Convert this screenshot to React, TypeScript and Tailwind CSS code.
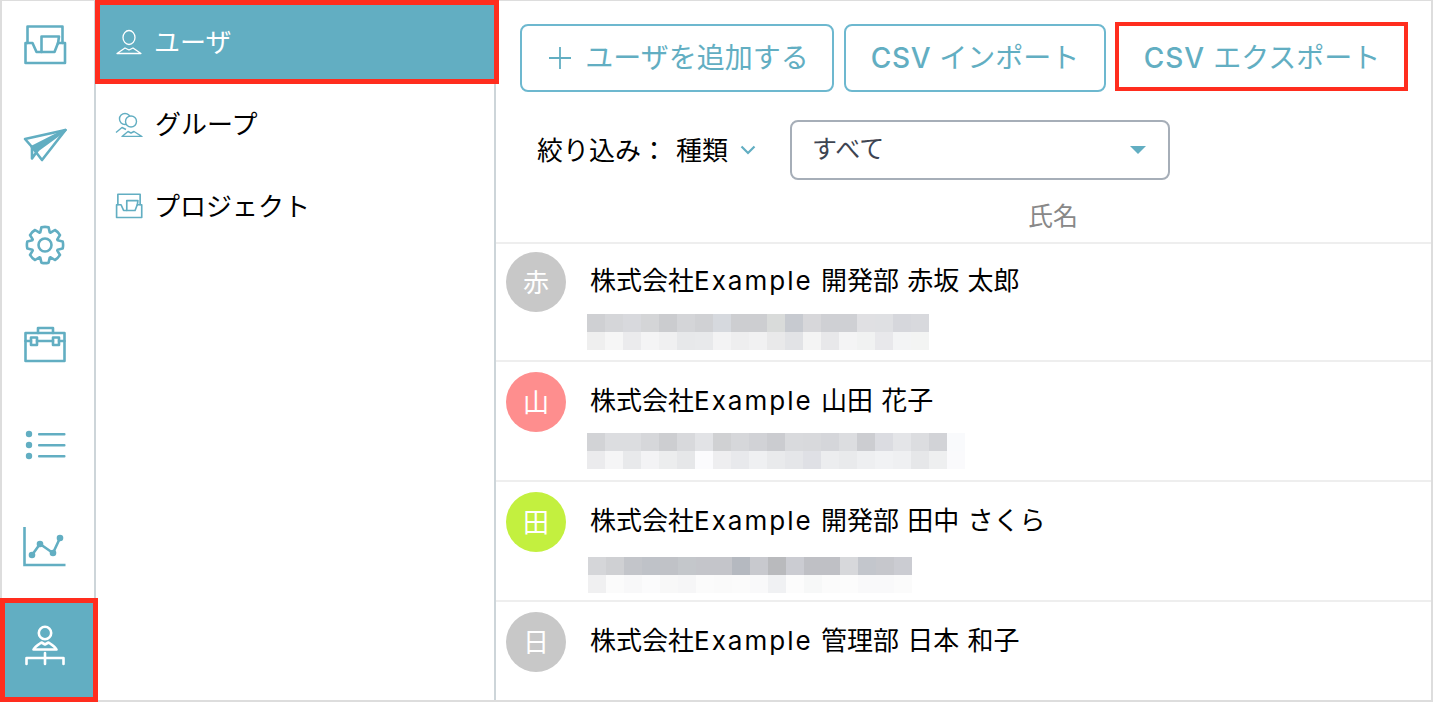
import type { ReactNode } from 'react';

const TEAL = '#62aec2';

function Icon({ children, size = 44 }: { children: ReactNode; size?: number }) {
  return (
    <svg width={size} height={size} viewBox="0 0 44 44" fill="none" stroke="currentColor" strokeWidth={2.6} strokeLinejoin="round" strokeLinecap="round">
      {children}
    </svg>
  );
}

function InboxIcon({ size }: { size?: number }) {
  return (
    <Icon size={size}>
      <path d="M4.5 20V3.5h35V20" />
      <path d="M2.5 20h7l4 9h18l3.5-9h7v20h-39.5z" />
      <path d="M18.5 29V13.5H36l-1 7" />
    </Icon>
  );
}

function PlaneIcon() {
  return (
    <Icon>
      <path d="M2 16 42.5 7 19 37 9 24z" />
      <path d="M9 24 42.5 7 15 27z" fill="currentColor" />
      <path d="M9 24v11.5l6-8.5" />
    </Icon>
  );
}

function gearPath() {
  const cx = 22;
  const cy = 22;
  const pts: string[] = [];
  for (let i = 0; i < 8; i++) {
    const a = (i * Math.PI) / 4 - Math.PI / 2;
    const p = (r: number, da: number) => `${(cx + r * Math.cos(a + da)).toFixed(2)} ${(cy + r * Math.sin(a + da)).toFixed(2)}`;
    pts.push(`${i === 0 ? 'M' : 'L'}${p(13.5, -0.36)}`, `L${p(18, -0.2)}`, `Q${p(18.6, 0)} ${p(18, 0.2)}`, `L${p(13.5, 0.36)}`);
  }
  return pts.join(' ') + 'Z';
}

function GearIcon() {
  return (
    <Icon>
      <path d={gearPath()} />
      <circle cx="22" cy="22" r="6.5" />
    </Icon>
  );
}

function CaseIcon() {
  return (
    <Icon>
      <path d="M15 10V5h15v5" />
      <path d="M2.5 10h39v28h-39z" />
      <path d="M2.5 18H8M14 18h16M36 18h5.5" />
      <rect x="8" y="14.5" width="6" height="7.5" />
      <rect x="30" y="14.5" width="6" height="7.5" />
    </Icon>
  );
}

function ListIcon() {
  return (
    <svg width={44} height={44} viewBox="0 0 44 44" fill="currentColor">
      <circle cx="6" cy="11" r="3.2" />
      <circle cx="6" cy="22" r="3.2" />
      <circle cx="6" cy="33" r="3.2" />
      <rect x="15" y="10" width="27.5" height="2.4" rx="1" />
      <rect x="15" y="21" width="27.5" height="2.4" rx="1" />
      <rect x="15" y="32" width="27.5" height="2.4" rx="1" />
    </svg>
  );
}

function ChartIcon() {
  return (
    <Icon>
      <path d="M1.5 4v38h41" strokeLinecap="butt" strokeLinejoin="miter" />
      <path d="M9 32 17 21 30 30 37 15" />
      <g fill="currentColor" stroke="none">
        <circle cx="9" cy="32" r="3.3" />
        <circle cx="17" cy="21" r="3.3" />
        <circle cx="30" cy="30" r="3.3" />
        <circle cx="37" cy="15" r="3.3" />
      </g>
    </Icon>
  );
}

function OrgIcon() {
  return (
    <Icon>
      <circle cx="22" cy="10" r="6.2" />
      <path d="M10.5 26.5c1.5-3 5-5 8-7l3.5 2 3.5-2c3 2 6.5 4 8 7z" />
      <path d="M22 30v11M3.5 41v-6h37v6" />
    </Icon>
  );
}

function UserIcon() {
  return (
    <svg width={26} height={26} viewBox="0 0 26 26" fill="none" stroke="currentColor" strokeWidth={1.3} strokeLinejoin="round">
      <ellipse cx="13" cy="8.5" rx="6" ry="7" />
      <path d="M1 24.5 9 19l4 2 4-2 8 5.5z" />
    </svg>
  );
}

function GroupIcon() {
  return (
    <svg width={28} height={26} viewBox="0 0 28 26" fill="none" stroke="currentColor" strokeWidth={1.4} strokeLinejoin="round">
      <circle cx="10" cy="8" r="5.5" />
      <circle cx="16" cy="10.5" r="5.5" fill="white" />
      <path d="M1 21.5 7 16.5l4 2" />
      <path d="M7 25.5l6-5 3 1.5 3-1.5 8 5z" fill="white" />
    </svg>
  );
}

const rail = [
  { key: 'inbox', icon: <InboxIcon /> },
  { key: 'plane', icon: <PlaneIcon /> },
  { key: 'gear', icon: <GearIcon /> },
  { key: 'case', icon: <CaseIcon /> },
  { key: 'list', icon: <ListIcon /> },
  { key: 'chart', icon: <ChartIcon /> },
];

const users = [
  {
    initial: '赤',
    color: 'bg-[#c8c8c8]',
    rest: ' 開発部 赤坂 太郎',
    rowClass: 'h-[118px] pt-[8px]',
    nameClass: 'top-[18px]',
    blurClass: 'ml-[81px] mt-[2px]',
    blur: [
      ['#cfd0d3', '#d5d6d9', '#d8d9dd', '#d4d5d7', '#cbcccf', '#d4d5d8', '#d0d1d4', '#d6d9de', '#cdced1', '#cdced1', '#d9dbda', '#c7cad0', '#d7d7da', '#cfd0d4', '#cfd0d4', '#e0e0e3', '#dfe0e3', '#d6d7dc', '#d8d9dd'],
      ['#efefef', '#f6f6f6', '#ebebed', '#f4f4f5', '#f0f0f1', '#e7e8ea', '#e8e9eb', '#f3f3f4', '#eeeeef', '#f1f1f2', '#e9e9ea', '#e2e3e6', '#f4f4f4', '#e8e8ea', '#f4f4f5', '#f1f2f2', '#e8e8eb', '#f3f4f5', '#f3f4f3'],
    ],
  },
  {
    initial: '山',
    color: 'bg-[#fe8e8e]',
    rest: ' 山田 花子',
    rowClass: 'h-[120px] pt-[10px]',
    nameClass: 'top-[20px]',
    blurClass: 'ml-[81px] mt-[1px]',
    blur: [
      ['#d2d3d6', '#dcdde0', '#dcdde0', '#d6d7da', '#cdced1', '#d8d9dc', '#e2e3e6', '#d0d1d3', '#d6d7da', '#d1d2d6', '#cbccd0', '#d9dadd', '#d8d9dc', '#d5d6da', '#dcdde0', '#cccdd1', '#dbdce1', '#e4e5e8', '#dcdde0', '#d2d3d7', '#f9fafc'],
      ['#ebebed', '#f5f5f6', '#e8e9eb', '#f3f3f5', '#ecedee', '#e6e7e9', '#fbfbfd', '#eeeef0', '#e8e9ec', '#eff0f2', '#e9eaec', '#e5e6e9', '#dfe0e5', '#ecedef', '#e9eaec', '#eeeff1', '#f1f2f4', '#eff0f2', '#e6e7e9', '#eeeff0', '#fafafc'],
    ],
  },
  {
    initial: '田',
    color: 'bg-[#c3f03f]',
    rest: ' 開発部 田中 さくら',
    rowClass: 'h-[120px] pt-[10px]',
    nameClass: 'top-[20px]',
    blurClass: 'ml-[82px] mt-[5px]',
    blur: [
      ['#d5d6d9', '#cfd0d3', '#c3c5ca', '#bfc2c8', '#c0c2c7', '#c4c7cb', '#c4c5ca', '#c4c5ca', '#b5b9c0', '#c8c9ce', '#b9babd', '#cbccd2', '#bfc0c5', '#bfc0c5', '#d7d8db', '#c3c6cc', '#c6c7cc', '#cbccd2'],
      ['#f0f0f1', '#fbfbfb', '#f8f8f9', '#fbfbfc', '#f8f8f8', '#f6f6f7', '#fbfbfb', '#fafafa', '#fbfbfb', '#f9f9fa', '#f0f1f3', '#fcfcfc', '#f7f8f8', '#fbfbfb', '#fcfcfc', '#f9f9fa', '#f9f9fa', '#fbfbfb'],
    ],
  },
  {
    initial: '日',
    color: 'bg-[#c8c8c8]',
    rest: ' 管理部 日本 和子',
    rowClass: 'h-[100px] pt-[10px]',
    nameClass: 'top-[20px]',
    blurClass: '',
    blur: [],
  },
];

function Button({ children }: { children: ReactNode }) {
  return (
    <button className="flex h-[68px] w-full items-center justify-center rounded-lg border-2 border-[#6db8cf] text-[28px] text-[#62aec2]">
      {children}
    </button>
  );
}

export default function App() {
  return (
    <div
      className="relative flex h-[704px] w-[1433px] overflow-hidden bg-white text-black"
      style={{ fontFamily: '"Inter", "Noto Sans CJK JP", sans-serif' }}
    >
      <div className="flex h-[702px] w-full border-x-2 border-b-2 border-t border-[#dddddd]">
        {/* icon rail */}
        <div className="flex h-full w-[94px] shrink-0 flex-col border-r-2 border-[#cdd5d9]">
          {rail.map((r) => (
            <div key={r.key} className="flex h-[100px] shrink-0 items-start justify-center pr-[6px] pt-[22px] text-[#62aec2]">
              {r.icon}
            </div>
          ))}
          <div className="flex h-[100px] shrink-0 items-start justify-center bg-[#62aec2] pr-[6px] pt-[22px] text-white">
            <OrgIcon />
          </div>
        </div>

        {/* sub nav */}
        <div className="h-full w-[400px] shrink-0 border-r-2 border-[#cdd5d9] text-[26px]">
          <div className="flex h-[82px] items-center gap-[12px] bg-[#62aec2] pl-[20px] text-white">
            <UserIcon />
            <span>ユーザ</span>
          </div>
          <div className="flex h-[82px] items-center gap-[12px] pl-[19px]">
            <span className="text-[#62aec2]"><GroupIcon /></span>
            <span>グループ</span>
          </div>
          <div className="flex h-[82px] items-center gap-[11px] pl-[19px]">
            <span className="text-[#62aec2]"><InboxIcon size={28} /></span>
            <span>プロジェクト</span>
          </div>
        </div>

        {/* main */}
        <div className="min-w-0 flex-1">
          <div className="flex gap-[10px] pl-[24px] pt-[23px]">
            <div className="w-[314px]">
              <Button>
                <svg width="24" height="24" viewBox="0 0 24 24" stroke={TEAL} strokeWidth="1.8" className="ml-[3px] mr-[13px]">
                  <path d="M12 1v22M1 12h22" />
                </svg>
                ユーザを追加する
              </Button>
            </div>
            <div className="w-[262px]">
              <Button><span className="font-medium tracking-[0.6px]">CSV</span><span className="ml-[8px]">インポート</span></Button>
            </div>
            <div className="w-[292px]">
              <button className="flex h-[68px] w-full items-center justify-center rounded-lg text-[28px] text-[#62aec2]">
                <span className="font-medium tracking-[1px]">CSV</span><span className="ml-[8px]">エクスポート</span>
              </button>
            </div>
          </div>

          <div className="mt-[28px] flex items-center pl-[41px]">
            <span className="text-[26px]">絞り込み：</span>
            <span className="ml-[9px] text-[26px]">種類</span>
            <svg width="16" height="10" viewBox="0 0 16 10" fill="none" stroke={TEAL} strokeWidth="2.2" className="ml-[12px]">
              <path d="M1.5 1.5 8 8l6.5-6.5" />
            </svg>
            <div className="ml-[34px] flex h-[60px] w-[380px] items-center justify-between rounded-lg border-2 border-[#a6aeb8] pl-[20px] pr-[22px] text-[25px] text-[#3d4451]">
              <span>すべて</span>
              <span className="h-0 w-0 border-x-[8px] border-t-[8px] border-x-transparent border-t-[#62aec2]" />
            </div>
          </div>

          <div className="mt-[20px] h-[42px] pl-[532px] text-[25px] leading-[32px] text-[#888888]">氏名</div>

          {users.map((u) => (
            <div key={u.initial} className={`relative border-t-2 border-[#eeeeee] pl-[10px] ${u.rowClass}`}>
              <div className={`flex h-[60px] w-[60px] items-center justify-center rounded-full text-[26px] text-white ${u.color}`}>
                {u.initial}
              </div>
              <div className={`absolute left-[94px] whitespace-pre text-[26px] leading-[38px] [word-spacing:1px] ${u.nameClass}`}>
                株式会社<span className="tracking-[2px]">Example</span>{u.rest}
              </div>
              <div className={`flex flex-col ${u.blurClass}`}>
                {u.blur.map((line, i) => (
                  <div key={i} className="flex">
                    {line.map((c, j) => (
                      <div key={j} className="h-[18px] w-[18px]" style={{ backgroundColor: c }} />
                    ))}
                  </div>
                ))}
              </div>
            </div>
          ))}
        </div>
      </div>

      {/* red annotation boxes */}
      <div className="absolute left-[95px] top-0 h-[84px] w-[404px] border-[5px] border-[#ff2d1e]" />
      <div className="absolute left-[1115px] top-[22px] h-[69px] w-[293px] border-[4px] border-[#ff2d1e]" />
      <div className="absolute left-0 top-[598px] h-[104px] w-[98px] border-[5px] border-[#ff2d1e]" />
    </div>
  );
}
